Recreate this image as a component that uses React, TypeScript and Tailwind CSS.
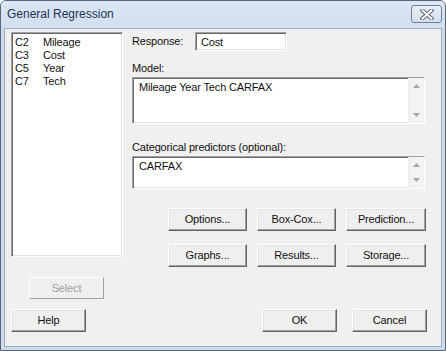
import type { ReactNode } from 'react'

const sunken =
  'bg-white border border-t-[#a0a0a0] border-l-[#a0a0a0] border-r-white border-b-white shadow-[inset_1px_1px_0_#696969,inset_-1px_-1px_0_#e3e3e3]'

function Btn({ children, w = 'w-[75px]', h = 'h-[23px]', disabled = false }: { children: ReactNode; w?: string; h?: string; disabled?: boolean }) {
  return (
    <div
      className={`${w} ${h} flex items-center justify-center bg-[#efefef] border ${
        disabled
          ? 'border-t-white border-l-white border-r-[#a0a0a0] border-b-[#a0a0a0] text-[#a0a0a0]'
          : 'border-t-white border-l-white border-r-[#646464] border-b-[#646464] shadow-[inset_-1px_-1px_0_#a0a0a0,inset_1px_1px_0_#e3e3e3]'
      }`}
    >
      {children}
    </div>
  )
}

function Scroller() {
  return (
    <div className="w-[16px] h-full bg-[#f3f3f3] border-l border-[#ececec] flex flex-col items-center justify-between py-[6px]">
      <svg width="7" height="4" viewBox="0 0 7 4">
        <path d="M3.5 0 L7 4 L0 4 Z" fill="#a6a6a6" />
      </svg>
      <svg width="7" height="4" viewBox="0 0 7 4">
        <path d="M0 0 L7 0 L3.5 4 Z" fill="#a6a6a6" />
      </svg>
    </div>
  )
}

const columns = [
  ['C2', 'Mileage'],
  ['C3', 'Cost'],
  ['C5', 'Year'],
  ['C7', 'Tech'],
]

export default function App() {
  return (
    <div className="w-[446px] h-[351px] flex flex-col bg-[#cedbeb] border border-[#56677d] rounded-t-[6px] overflow-hidden font-['Liberation_Sans',Arial,sans-serif] text-[11px] leading-[13px] tracking-[-0.15px] text-[#111]">
      {/* Title bar */}
      <div className="h-[27px] flex justify-between bg-gradient-to-b from-[#dbe6f3] to-[#d2dff0] pl-[6px] pr-[3px]">
        <span className="mt-[6px] text-[12px] leading-[14px] tracking-normal text-[#1f3450]">General Regression</span>
        <div className="mt-[4px] w-[31px] h-[18px] rounded-[3px] border border-[#6f7f94] bg-gradient-to-b from-[#e9eff7] to-[#d3deeb] flex items-center justify-center">
          <svg width="14" height="11" viewBox="0 0 14 11">
            <path d="M2.5 1.5 L11.5 9.5 M11.5 1.5 L2.5 9.5" stroke="#5b6778" strokeWidth="4" strokeLinecap="square" />
            <path d="M2.5 1.5 L11.5 9.5 M11.5 1.5 L2.5 9.5" stroke="#ffffff" strokeWidth="2" strokeLinecap="square" />
          </svg>
        </div>
      </div>

      {/* Client area */}
      <div className="mx-[3px] mb-[3px] h-[319px] bg-[#f0f0f0] border border-[#9eadc0] flex flex-col">
        <div className="flex pt-[3px] pl-[6px]">
          {/* Column list */}
          <div className="flex flex-col w-[112px]">
            <div className={`${sunken} h-[225px] pt-[3px] pl-[3px]`}>
              {columns.map(([c, n]) => (
                <div key={c} className="flex">
                  <span className="w-[28px]">{c}</span>
                  <span>{n}</span>
                </div>
              ))}
            </div>
            <div className="mt-[20px] ml-[18px]">
              <Btn h="h-[22px]" disabled>
                Select
              </Btn>
            </div>
          </div>

          {/* Right side */}
          <div className="ml-[9px] flex flex-col">
            <div className="flex items-start h-[19px]">
              <span className="w-[63px] pt-[3px]">Response:</span>
              <div className={`${sunken} w-[92px] h-[19px] pl-[5px] pt-[3px]`}>Cost</div>
            </div>

            <div className="mt-[11px]">Model:</div>
            <div className={`${sunken} mt-[2px] w-[293px] h-[47px] flex`}>
              <div className="flex-1 pl-[6px] pt-[3px]">Mileage Year Tech CARFAX</div>
              <Scroller />
            </div>

            <div className="mt-[17px]">Categorical predictors (optional):</div>
            <div className={`${sunken} mt-[2px] w-[293px] h-[33px] flex`}>
              <div className="flex-1 pl-[6px] pt-[3px]">CARFAX</div>
              <Scroller />
            </div>

            <div className="mt-[19px] ml-[36px] grid grid-cols-[79px_79px_80px] gap-x-[10px] gap-y-[13px]">
              <Btn w="w-[79px]">Options...</Btn>
              <Btn w="w-[79px]">Box-Cox...</Btn>
              <Btn w="w-[80px]">Prediction...</Btn>
              <Btn w="w-[79px]">Graphs...</Btn>
              <Btn w="w-[79px]">Results...</Btn>
              <Btn w="w-[80px]">Storage...</Btn>
            </div>
          </div>
        </div>

        {/* Bottom buttons */}
        <div className="flex mt-[10px] pl-[6px] pr-[14px]">
          <Btn>Help</Btn>
          <div className="ml-auto">
            <Btn>OK</Btn>
          </div>
          <div className="ml-[15px]">
            <Btn>Cancel</Btn>
          </div>
        </div>
      </div>
    </div>
  )
}
